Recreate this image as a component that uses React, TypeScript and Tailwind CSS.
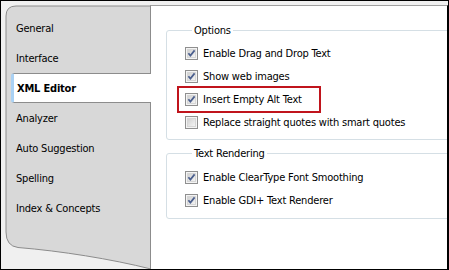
import React from 'react';

const tabs = ['General', 'Interface', 'XML Editor', 'Analyzer', 'Auto Suggestion', 'Spelling', 'Index & Concepts'];

const CheckBox = ({ checked }: { checked: boolean }) => (
    <svg width="13" height="13" viewBox="0 0 13 13" className="shrink-0">
        <defs>
            <linearGradient id="cbFill" x1="0" y1="0" x2="1" y2="1">
                <stop offset="0" stopColor="#cfcfcf" />
                <stop offset="1" stopColor="#f6f6f6" />
            </linearGradient>
        </defs>
        <rect x="0.5" y="0.5" width="12" height="12" fill="#f4f4f4" stroke="#8f8f8f" />
        <rect x="2.5" y="2.5" width="8" height="8" fill="url(#cbFill)" stroke="#d6d6d6" />
        {checked && <path d="M3.4 6.2 L5.4 8.6 L9.6 3.4" fill="none" stroke="#4b5f8e" strokeWidth="1.7" />}
    </svg>
);

const Row = ({ label, checked = true, highlight = false }: { label: string; checked?: boolean; highlight?: boolean }) => (
    <div className="relative h-[23px] flex items-center gap-[5px]">
        <CheckBox checked={checked} />
        <span className="whitespace-nowrap">{label}</span>
        {/* callout around the row */}
        {highlight && <div className="absolute -left-[8px] -top-[2px] w-[144px] h-[27px] border-2 border-[#c0141c]" />}
    </div>
);

export default function App() {
    return (
        <div className="w-[449px] h-[270px] border border-black bg-[#f0f0f0] flex overflow-hidden text-[11px] leading-[13px] text-black font-['DejaVu_Sans_Condensed','DejaVu_Sans',sans-serif] tracking-[-0.2px]">
            {/* Tab strip */}
            <div className="relative w-[149px] shrink-0">
                <svg className="absolute inset-0" width="149" height="268" viewBox="0 0 149 268">
                    <path
                        d="M150 5 L15 5 Q5 5 5 15 L5 231 Q5 245 17 246.5 C60 250 110 258 150 268 Z"
                        fill="#d8d8d8"
                        stroke="#8c8c8c"
                    />
                </svg>
                <div className="relative pt-[12px] flex flex-col">
                    {tabs.map(t =>
                        t === 'XML Editor' ? (
                            <div
                                key={t}
                                className="relative z-10 h-[30px] ml-[10px] -mr-[1px] pl-[3px] flex items-center bg-white border-y border-[#8c8c8c] border-l-[3px] border-l-[#a9d1f4] rounded-l-[3px] font-bold"
                            >
                                {t}
                            </div>
                        ) : (
                            <div key={t} className="h-[30px] pl-[15px] flex items-center">
                                {t}
                            </div>
                        )
                    )}
                </div>
            </div>

            {/* Settings page */}
            <div className="flex-1 mt-[4px] bg-white border-l border-t border-l-[#8c8c8c] border-t-[#a0a0a0] border-r border-r-black overflow-hidden">
                <div className="pl-[15px] pt-[18px] w-[340px]">
                    <fieldset className="border border-[#d5dfe5] rounded-[3px] pl-[18px] pt-[5px] pb-[5px]">
                        <legend className="ml-[7px] px-[2px] h-[13px]">Options</legend>
                        <Row label="Enable Drag and Drop Text" />
                        <Row label="Show web images" />
                        <Row label="Insert Empty Alt Text" highlight />
                        <Row label="Replace straight quotes with smart quotes" checked={false} />
                    </fieldset>
                    <fieldset className="mt-[7px] border border-[#d5dfe5] rounded-[3px] pl-[18px] pt-[6px] pb-[6px]">
                        <legend className="ml-[7px] px-[2px] h-[13px]">Text Rendering</legend>
                        <Row label="Enable ClearType Font Smoothing" />
                        <Row label="Enable GDI+ Text Renderer" />
                    </fieldset>
                </div>
            </div>
        </div>
    );
}
